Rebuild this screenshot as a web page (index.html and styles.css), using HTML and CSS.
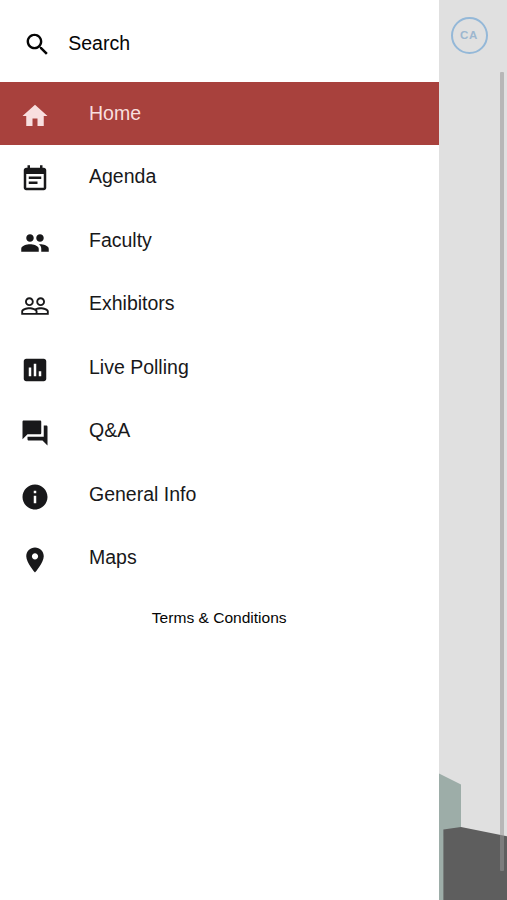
FILE: index.html
```html
<!DOCTYPE html>
<html lang="en">
<head>
<meta charset="utf-8">
<title>Menu</title>
<link rel="stylesheet" href="styles.css">
</head>
<body>
<div class="app">
  <nav class="drawer">
    <div class="search">
      <svg class="icon" viewBox="0 0 24 24"><path d="M15.5 14h-.79l-.28-.27C15.41 12.59 16 11.11 16 9.5 16 5.91 13.09 3 9.5 3S3 5.91 3 9.5 5.91 16 9.5 16c1.61 0 3.09-.59 4.23-1.57l.27.28v.79l5 4.99L20.49 19l-4.99-5zm-6 0C7.01 14 5 11.99 5 9.5S7.01 5 9.5 5 14 7.01 14 9.5 11.99 14 9.5 14z"/></svg>
      <span class="search-label">Search</span>
    </div>
    <div class="menu">
      <a class="item active"><svg class="icon" viewBox="0 0 24 24"><path d="M10 20v-6h4v6h5v-8h3L12 3 2 12h3v8z"/></svg><span class="label">Home</span></a>
      <a class="item"><svg class="icon" viewBox="0 0 24 24"><path d="M17 10H7v2h10v-2zm2-7h-1V1h-2v2H8V1H6v2H5c-1.11 0-1.99.9-1.99 2L3 19c0 1.1.89 2 2 2h14c1.1 0 2-.9 2-2V5c0-1.1-.9-2-2-2zm0 16H5V8h14v11zm-5-5H7v2h7v-2z"/></svg><span class="label">Agenda</span></a>
      <a class="item"><svg class="icon" viewBox="0 0 24 24"><path d="M16 11c1.66 0 2.99-1.34 2.99-3S17.66 5 16 5s-3 1.34-3 3 1.34 3 3 3zm-8 0c1.66 0 2.99-1.34 2.99-3S9.66 5 8 5 5 6.34 5 8s1.34 3 3 3zm0 2c-2.33 0-7 1.17-7 3.5V19h14v-2.5c0-2.33-4.67-3.5-7-3.5zm8 0c-.29 0-.62.02-.97.05 1.16.84 1.97 1.97 1.97 3.45V19h6v-2.5c0-2.33-4.67-3.5-7-3.5z"/></svg><span class="label">Faculty</span></a>
      <a class="item"><svg class="icon" viewBox="0 0 24 24"><path d="M16.5 13c-1.2 0-3.07.34-4.5 1-1.43-.67-3.3-1-4.5-1C5.33 13 1 14.08 1 16.25V19h22v-2.75c0-2.17-4.33-3.25-6.5-3.25zm-4 4.5h-10v-1.25c0-.54 2.56-1.75 5-1.75s5 1.21 5 1.75v1.25zm9 0H14v-1.25c0-.46-.2-.86-.52-1.22.88-.3 1.96-.53 3.02-.53 2.44 0 5 1.21 5 1.75v1.25zM7.5 12c1.93 0 3.5-1.57 3.5-3.5S9.43 5 7.5 5 4 6.57 4 8.5 5.57 12 7.5 12zm0-5.5c1.1 0 2 .9 2 2s-.9 2-2 2-2-.9-2-2 .9-2 2-2zm9 5.5c1.93 0 3.5-1.57 3.5-3.5S18.43 5 16.5 5 13 6.57 13 8.5s1.57 3.5 3.5 3.5zm0-5.5c1.1 0 2 .9 2 2s-.9 2-2 2-2-.9-2-2 .9-2 2-2z"/></svg><span class="label">Exhibitors</span></a>
      <a class="item"><svg class="icon" viewBox="0 0 24 24"><path d="M19 3H5c-1.1 0-2 .9-2 2v14c0 1.1.9 2 2 2h14c1.1 0 2-.9 2-2V5c0-1.1-.9-2-2-2zM9 17H7v-7h2v7zm4 0h-2V7h2v10zm4 0h-2v-4h2v4z"/></svg><span class="label">Live Polling</span></a>
      <a class="item"><svg class="icon" viewBox="0 0 24 24"><path d="M21 6h-2v9H6v2c0 .55.45 1 1 1h11l4 4V7c0-.55-.45-1-1-1zm-4 6V3c0-.55-.45-1-1-1H3c-.55 0-1 .45-1 1v14l4-4h10c.55 0 1-.45 1-1z"/></svg><span class="label">Q&amp;A</span></a>
      <a class="item"><svg class="icon" viewBox="0 0 24 24"><path d="M12 2C6.48 2 2 6.48 2 12s4.48 10 10 10 10-4.48 10-10S17.52 2 12 2zm1 15h-2v-6h2v6zm0-8h-2V7h2v2z"/></svg><span class="label">General Info</span></a>
      <a class="item"><svg class="icon" viewBox="0 0 24 24"><path d="M12 2C8.13 2 5 5.13 5 9c0 5.25 7 13 7 13s7-7.75 7-13c0-3.87-3.13-7-7-7zm0 9.5c-1.38 0-2.5-1.12-2.5-2.5s1.12-2.5 2.5-2.5 2.5 1.12 2.5 2.5-1.12 2.5-2.5 2.5z"/></svg><span class="label">Maps</span></a>
    </div>
    <a class="terms">Terms &amp; Conditions</a>
  </nav>
  <main class="page">
    <div class="avatar">CA</div>
    <svg class="scene" viewBox="0 0 69 130">
      <path fill="#9dada8" d="M0 3.5L22 14.5V130H0z"/>
      <path fill="#5e5e5e" d="M4.4 59.5L22 57 69 66.5V130H4.4z"/>
    </svg>
    <div class="scrollbar"></div>
  </main>
</div>
</body>
</html>
```
FILE: styles.css
```css
* { box-sizing: border-box; }

body {
  margin: 0;
  font-family: "Liberation Sans", Arial, sans-serif;
  background: #fff;
}

.app {
  display: flex;
  height: 900px;
  overflow: hidden;
}

.drawer {
  display: flex;
  flex-direction: column;
  width: 438.5px;
  flex: none;
  background: #fff;
}

.icon {
  width: 30px;
  height: 30px;
  flex: none;
  fill: currentColor;
}

.search {
  display: flex;
  align-items: center;
  height: 81.5px;
  padding: 8px 0 0 23px;
  color: #050505;
}

.search .icon { width: 29px; height: 29px; }

.search-label {
  margin: -3px 0 0 16.2px;
  font-size: 19.5px;
  line-height: 24px;
}

.item {
  display: flex;
  align-items: center;
  height: 63.5px;
  padding-left: 20px;
  color: #18181a;
}

.item .icon { margin-top: 4.5px; }

.label {
  margin: -1px 0 0 39px;
  font-size: 19.5px;
  line-height: 24px;
}

.active {
  background: #a8413d;
  color: #f8dfdf;
}

.terms {
  margin-top: 18px;
  font-size: 15.55px;
  line-height: 20px;
  text-align: center;
  color: #050505;
}

.page {
  position: relative;
  display: flex;
  flex-direction: column;
  justify-content: space-between;
  flex: 1;
  background: #e0e0e0;
}

.avatar {
  display: flex;
  align-items: center;
  justify-content: center;
  width: 37px;
  height: 37px;
  margin: 16.5px 0 0 12px;
  border: 2.5px solid #94b8d8;
  border-radius: 50%;
  color: #9db7cf;
  font-size: 11.5px;
  font-weight: bold;
  letter-spacing: 0.6px;
}

.scene {
  display: block;
  width: 69px;
  height: 130px;
}

.scrollbar {
  position: absolute;
  top: 72px;
  right: 3.5px;
  width: 4px;
  height: 799px;
  border-radius: 1px;
  background: rgba(150, 150, 150, 0.55);
}
```
